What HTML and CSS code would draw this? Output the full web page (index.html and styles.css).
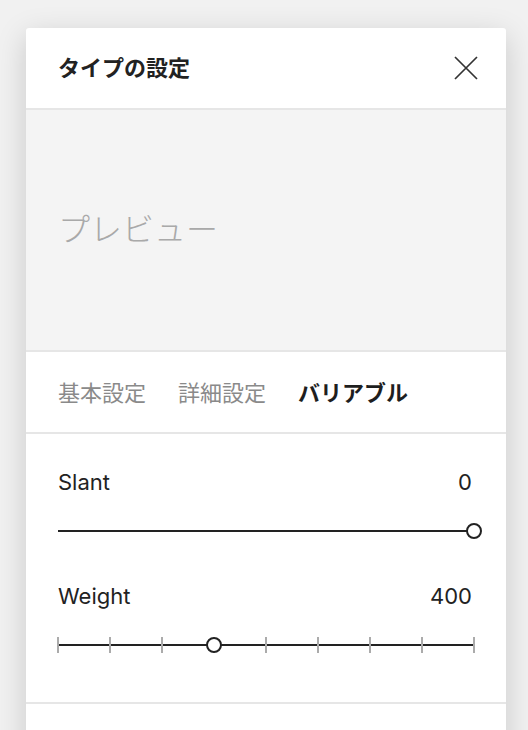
FILE: index.html
```html
<!DOCTYPE html>
<html lang="ja">
<head>
    <meta charset="UTF-8">
    <meta name="viewport" content="width=device-width, initial-scale=1">
    <title>タイプの設定</title>
    <link rel="stylesheet" href="styles.css">
</head>
<body>
    <div class="panel">
        <div class="panel-header">
            <h2>タイプの設定</h2>
            <button class="close" title="閉じる">
                <svg width="24" height="24" viewBox="0 0 24 24">
                    <path d="M1 1 L23 23 M23 1 L1 23" stroke="#333" stroke-width="1.7" fill="none"/>
                </svg>
            </button>
        </div>

        <div class="preview">プレビュー</div>

        <div class="tabs">
            <span class="tab">基本設定</span>
            <span class="tab">詳細設定</span>
            <span class="tab active">バリアブル</span>
        </div>

        <!-- variable axes -->
        <div class="axes">
            <div class="axis">
                <div class="axis-head">
                    <span>Slant</span>
                    <span>0</span>
                </div>
                <div class="slider">
                    <div class="track"></div>
                    <div class="thumb" style="left: 100%"></div>
                </div>
            </div>

            <div class="axis">
                <div class="axis-head">
                    <span>Weight</span>
                    <span>400</span>
                </div>
                <div class="slider">
                    <div class="track"></div>
                    <div class="ticks">
                        <i></i><i></i><i></i><i></i><i></i><i></i><i></i><i></i><i></i>
                    </div>
                    <div class="thumb" style="left: 37.5%"></div>
                </div>
            </div>
        </div>

        <div class="more"></div>
    </div>
</body>
</html>
```

FILE: styles.css
```css
body {
    margin: 0;
    padding: 28px 22px 0 26px;
    background-color: #f1f1f1;
    font-family: Inter, "Noto Sans CJK JP", sans-serif;
    color: #222;
    overflow: hidden;
}

.panel {
    width: 480px;
    background-color: #ffffff;
    border-radius: 3px 3px 0 0;
    box-shadow: 0 8px 30px rgba(0, 0, 0, 0.17);
}

.panel-header {
    height: 80px;
    display: flex;
    align-items: center;
    justify-content: space-between;
    padding: 0 28px 0 32px;
    border-bottom: 2px solid #e6e6e6;
}

h2 {
    margin: 0 0 4px;
    font-family: "Noto Sans CJK JP", sans-serif;
    font-size: 22px;
    font-weight: 700;
    color: #222;
}

.close {
    display: flex;
    padding: 0;
    border: none;
    background: none;
    cursor: pointer;
}

.preview {
    height: 242px;
    box-sizing: border-box;
    display: flex;
    align-items: center;
    padding: 0 32px 7px;
    background-color: #f4f4f4;
    border-bottom: 2px solid #e6e6e6;
    font-family: "Noto Sans CJK JP", sans-serif;
    font-size: 32px;
    font-weight: 300;
    color: #a9a9a9;
}

.tabs {
    height: 82px;
    box-sizing: border-box;
    display: flex;
    align-items: center;
    gap: 32px;
    padding: 0 32px 3px;
    border-bottom: 2px solid #e6e6e6;
    font-family: "Noto Sans CJK JP", sans-serif;
    font-size: 22px;
}

.tab {
    color: #8a8a8a;
    cursor: pointer;
}

.tab.active {
    color: #1e1e1e;
    font-weight: 700;
}

.axes {
    display: flex;
    flex-direction: column;
    gap: 34px;
    padding: 32px 32px 42px;
    border-bottom: 2px solid #e6e6e6;
}

.axis {
    display: flex;
    flex-direction: column;
    gap: 16px;
}

.axis-head {
    height: 32px;
    display: flex;
    align-items: center;
    justify-content: space-between;
    font-size: 22px;
    padding-right: 2px;
}

.slider {
    position: relative;
    height: 32px;
}

.track {
    position: absolute;
    left: 0;
    right: 0;
    top: 16px;
    height: 2px;
    background-color: #222;
}

.ticks {
    position: absolute;
    left: 0;
    right: 0;
    top: 9px;
    display: flex;
    justify-content: space-between;
}

.ticks i {
    width: 2px;
    height: 16px;
    background-color: #ababab;
}

.ticks i:first-child {
    margin-left: -1px;
}

.ticks i:last-child {
    margin-right: -1px;
}

.thumb {
    position: absolute;
    top: 9px;
    width: 16px;
    height: 16px;
    margin-left: -8px;
    box-sizing: border-box;
    border: 2px solid #222;
    border-radius: 50%;
    background-color: #ffffff;
}

.more {
    height: 60px;
}
```
